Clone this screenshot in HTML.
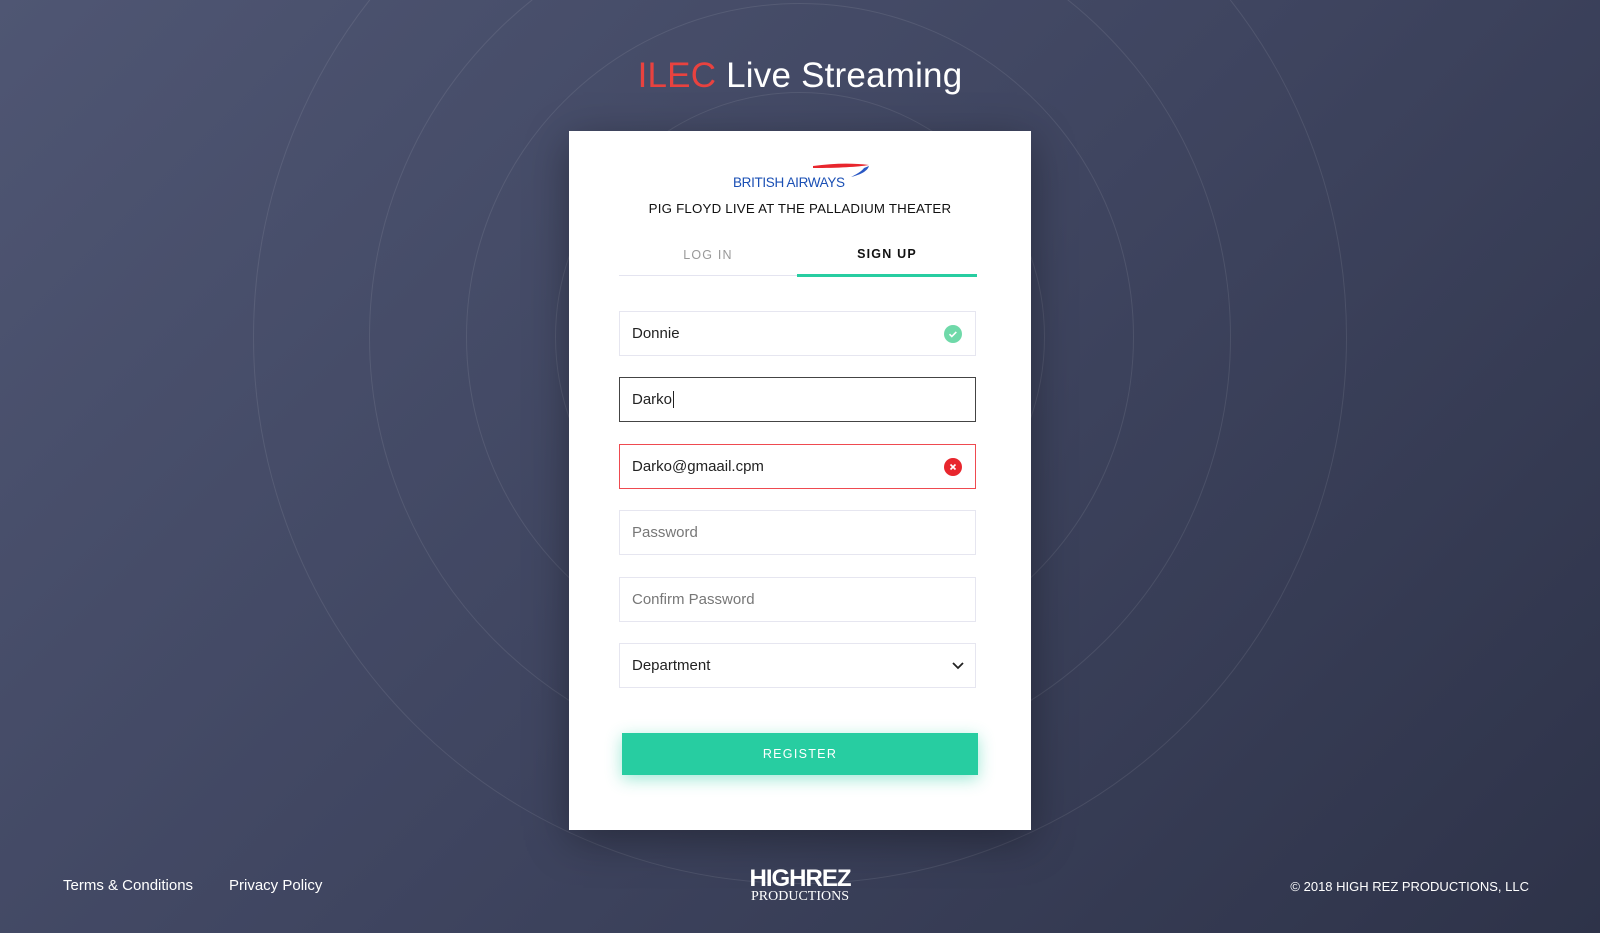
<!DOCTYPE html>
<html style="background:#3f4560"><head><meta charset="utf-8"><style>
*{box-sizing:border-box;margin:0;padding:0}
html,body{width:1600px;height:933px;overflow:hidden}
body{font-family:"Liberation Sans",sans-serif}
.w{position:absolute;left:0;top:0;width:1600px;height:933px;overflow:hidden;background:linear-gradient(135deg,#4f5673 0%,#3f4560 50%,#2e3349 100%)}
.c{position:absolute;border:1px solid rgba(255,255,255,0.09);border-radius:50%}
h1{position:absolute;top:56px;left:0;width:1600px;text-align:center;font-weight:normal;font-size:35px;color:#fff;letter-spacing:0.2px}
h1 span{color:#e8423f}
.card{position:absolute;left:569px;top:131px;width:462px;height:699px;background:#fff;box-shadow:0 10px 40px rgba(0,0,0,0.35)}
.sub{position:absolute;top:70px;width:100%;text-align:center;font-size:13.3px;color:#111;letter-spacing:0.2px}
.tab{position:absolute;top:117px;font-size:12.5px;letter-spacing:1.2px;text-align:center}
.in{position:absolute;left:50px;width:357px;height:45px;border:1px solid #e6e6f0;font-size:15px;color:#222;padding-left:12px;line-height:43px}
.ph{color:#777}
.btn{position:absolute;left:53px;top:602px;width:356px;height:42px;background:#27cda1;color:#fff;font-size:12.5px;letter-spacing:1.3px;text-align:center;line-height:42px;box-shadow:0 4px 16px rgba(39,205,161,0.45)}
.ic{position:absolute;right:13px;top:13px;width:18px;height:18px;border-radius:50%}
.ic svg{display:block}
.f{position:absolute;color:#fff;font-size:15px;top:877px}
</style></head><body><div class="w">
<div class="c" style="left:555px;top:92px;width:490px;height:490px"></div>
<div class="c" style="left:466px;top:3px;width:668px;height:668px"></div>
<div class="c" style="left:369px;top:-94px;width:862px;height:862px"></div>
<div class="c" style="left:253px;top:-210px;width:1094px;height:1094px"></div>
<h1><span>ILEC</span> Live Streaming</h1>
<div class="card">
<svg style="position:absolute;left:160px;top:32px" width="145" height="28" viewBox="0 0 145 28">
<text x="4" y="24" font-family="Liberation Sans" font-size="13.5" fill="#1a4fb4" textLength="112">BRITISH AIRWAYS</text>
<path d="M84 3 C105 0 125 0 140 2 C128 4 110 5 84 5Z" fill="#e8262d"/>
<path d="M140 3 C138 9 130 12 122 14 C128 11 133 8 135 5Z" fill="#2a58c4"/>
</svg>
<div class="sub">PIG FLOYD LIVE AT THE PALLADIUM THEATER</div>
<div class="tab" style="left:50px;width:178px;color:#999">LOG IN</div>
<div class="tab" style="left:228px;width:180px;color:#111;font-weight:bold;top:116px">SIGN UP</div>
<div style="position:absolute;left:50px;top:144px;width:178px;height:1px;background:#e4e4f0"></div>
<div style="position:absolute;left:228px;top:143px;width:180px;height:3px;background:#27cda1"></div>
<div class="in" style="top:180px">Donnie<div class="ic" style="background:#6fd9a9"><svg width="18" height="18"><path d="M5.5 9.2l2.3 2.3 4.5-4.6" stroke="#fff" stroke-width="1.6" fill="none"/></svg></div></div>
<div class="in" style="top:246px;border:1.5px solid #444">Darko<span style="border-left:1.5px solid #222;margin-left:1px"></span></div>
<div class="in" style="top:313px;border:1.5px solid #ef4a50">Darko@gmaail.cpm<div class="ic" style="background:#e8262d"><svg width="18" height="18"><path d="M6.5 6.5l5 5M11.5 6.5l-5 5" stroke="#fff" stroke-width="1.6"/></svg></div></div>
<div class="in ph" style="top:379px">Password</div>
<div class="in ph" style="top:446px">Confirm Password</div>
<div class="in" style="top:512px">Department<svg style="position:absolute;right:10px;top:17px" width="14" height="10"><path d="M2 2l5 5 5-5" stroke="#222" stroke-width="1.8" fill="none"/></svg></div>
<div class="btn">REGISTER</div>
</div>
<div class="f" style="left:63px">Terms &amp; Conditions</div>
<div class="f" style="left:229px">Privacy Policy</div>
<div class="f" style="right:71px;font-size:13px;top:879px">© 2018 HIGH REZ PRODUCTIONS, LLC</div>
<div style="position:absolute;left:748px;top:868px;width:104px;text-align:center;color:#fff">
<div style="font-size:24px;font-weight:bold;letter-spacing:-1px;line-height:22px">HIGHREZ</div>
<div style="font-family:'Liberation Serif',serif;font-size:14px;line-height:14px">PRODUCTIONS</div>
</div>
</div></body></html>
